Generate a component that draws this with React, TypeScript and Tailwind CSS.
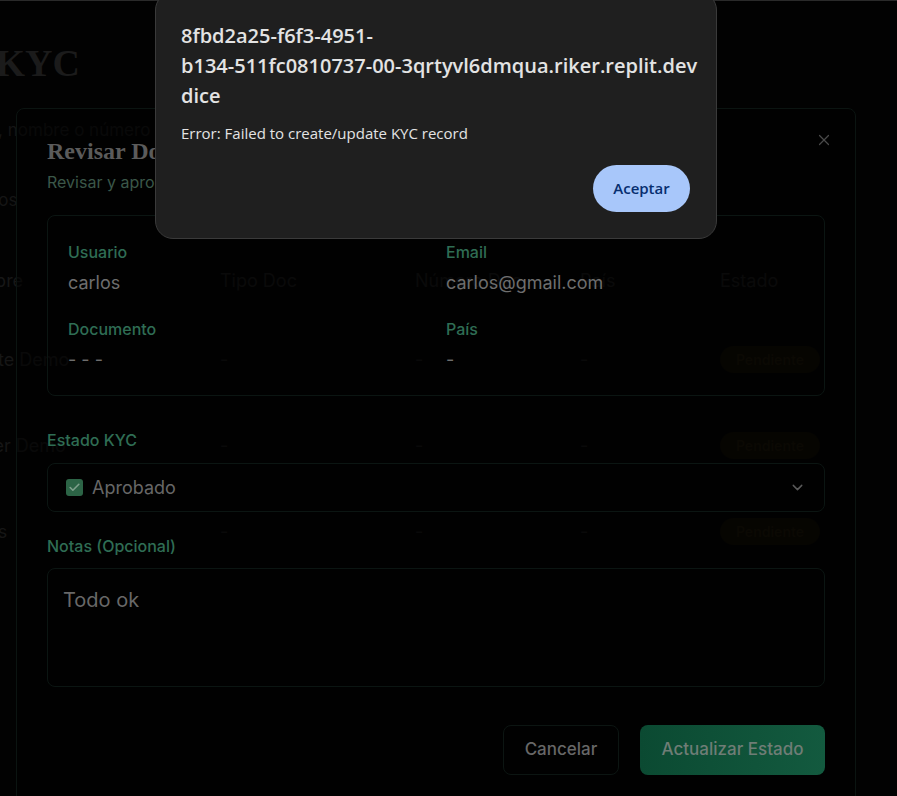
import { ChevronDown, X, Check } from "lucide-react";

const rows = ["Cliente Demo", "Trader Demo", "carlos"];

function Background() {
  return (
    <div className="relative min-h-[796px] w-[897px] overflow-hidden bg-[#020202] border-t border-[#2a2a2a] font-['Inter',sans-serif]">
      {/* page header */}
      <div className="ml-[-230px] mt-[40px] w-[310px] text-right font-['Liberation_Serif',serif] text-[38px] font-bold leading-[44px] text-[#1b1b1b]">
        Verificación KYC
      </div>
      <div className="ml-[-137px] mt-[33px] text-[17px] leading-6 text-[#151515]">
        Buscar por email, nombre o número de documento...
      </div>
      <div className="ml-[-32px] mt-[46px] text-[17px] leading-6 text-[#151515]">Todos</div>

      {/* table */}
      <div className="mt-[32px]">
        <div className="ml-[-45px] grid h-[72px] grid-cols-[265px_195px_165px_140px_1fr] items-center text-[18px] text-[#171717]">
          <span>Nombre</span>
          <span>Tipo Doc</span>
          <span>Número Doc</span>
          <span>País</span>
          <span>Estado</span>
        </div>
        {rows.map((name) => (
          <div key={name} className="ml-[-45px] grid h-[86px] grid-cols-[265px_195px_165px_140px_1fr] items-center text-[18px] text-[#161616]">
            <span>{name}</span>
            <span>-</span>
            <span>-</span>
            <span>-</span>
            <span>
              <span className="inline-flex h-[27px] w-[100px] items-center justify-center rounded-full bg-[#0d0a02] text-[14px] font-semibold text-[#1a1406]">
                Pendiente
              </span>
            </span>
          </div>
        ))}
      </div>
    </div>
  );
}

function Modal() {
  return (
    <div className="absolute left-[16px] top-[108px] h-[720px] w-[840px] rounded-lg border border-[#0b1411] bg-[#020202]/60 px-[30px] pt-[26px] font-['Inter',sans-serif]">
      <button className="absolute right-[22px] top-[22px] text-[#4a4a4a]">
        <X className="h-[18px] w-[18px]" strokeWidth={1.6} />
      </button>
      <h2 className="font-['Liberation_Serif',serif] text-[24px] font-bold leading-8 text-[#5b5b5b]">
        Revisar Documentos KYC
      </h2>
      <p className="mt-[3px] text-[16px] leading-6 text-[#3b5749]">
        Revisar y aprobar la verificación de identidad del usuario
      </p>

      <div className="mt-[21px] h-[181px] rounded-lg border border-[#0b1512] px-5 pt-[24px]">
        <div className="grid grid-cols-2 gap-x-[20px] gap-y-[20px]">
          <div>
            <div className="text-[16px] font-medium leading-6 text-[#2f6d54]">Usuario</div>
            <div className="mt-[5px] text-[18px] leading-7 text-[#6e6e6e]">carlos</div>
          </div>
          <div>
            <div className="text-[16px] font-medium leading-6 text-[#2f6d54]">Email</div>
            <div className="mt-[5px] text-[18px] leading-7 text-[#6e6e6e]">carlos@gmail.com</div>
          </div>
          <div>
            <div className="text-[16px] font-medium leading-6 text-[#2f6d54]">Documento</div>
            <div className="mt-[5px] text-[18px] leading-7 text-[#6e6e6e]">- - -</div>
          </div>
          <div>
            <div className="text-[16px] font-medium leading-6 text-[#2f6d54]">País</div>
            <div className="mt-[5px] text-[18px] leading-7 text-[#6e6e6e]">-</div>
          </div>
        </div>
      </div>

      <div className="mt-[32px] text-[16px] font-medium leading-6 text-[#2f6d54]">Estado KYC</div>
      <div className="mt-[11px] flex h-[49px] items-center rounded-lg border border-[#0b1512] pl-[18px] pr-[18px]">
        <span className="flex h-[17px] w-[17px] items-center justify-center rounded-[3px] bg-[#2c6446]">
          <Check className="h-[13px] w-[13px] text-[#7fa08c]" strokeWidth={3} />
        </span>
        <span className="ml-[9px] text-[18px] text-[#676767]">Aprobado</span>
        <ChevronDown className="ml-auto h-[17px] w-[17px] text-[#5a5a5a]" strokeWidth={2} />
      </div>

      <div className="mt-[22px] text-[16px] font-medium leading-6 text-[#2f6d54]">Notas (Opcional)</div>
      <div className="mt-[10px] h-[119px] rounded-lg border border-[#0b1512] px-[15px] pt-[17px] text-[20px] leading-7 text-[#686868]">
        Todo ok
      </div>

      <div className="mt-[38px] flex justify-end gap-[21px]">
        <button className="h-[50px] w-[116px] rounded-lg border border-[#0c1512] text-[17px] font-medium text-[#676767]">
          Cancelar
        </button>
        <button className="h-[50px] w-[185px] rounded-lg bg-gradient-to-r from-[#0b4a32] to-[#135a3f] text-[17px] font-medium text-[#6f7d76]">
          Actualizar Estado
        </button>
      </div>
    </div>
  );
}

function Alert() {
  return (
    <div className="absolute left-[155px] top-[-8px] w-[562px] rounded-[18px] border border-[#3a3a3a] bg-[#1f1f1f] pl-[25px] pr-[20px] pb-[26px] pt-[28px] font-['Open_Sans',sans-serif] text-[#e3e3e3]">
      <div className="whitespace-nowrap text-[20px] font-semibold leading-[30px]">
        <div>8fbd2a25-f6f3-4951-</div>
        <div>b134-511fc0810737-00-3qrtyvl6dmqua.riker.replit.dev</div>
        <div>dice</div>
      </div>
      <p className="mt-[12px] text-[15px] leading-5">Error: Failed to create/update KYC record</p>
      <div className="mt-[22px] flex justify-end pr-[6px]">
        <button className="h-[47px] w-[97px] rounded-full bg-[#a8c7fa] text-[15px] font-semibold text-[#062e6f]">
          Aceptar
        </button>
      </div>
    </div>
  );
}

export default function App() {
  return (
    <div className="relative h-[796px] w-[897px] overflow-hidden bg-[#020202]">
      <Background />
      <Modal />
      <Alert />
    </div>
  );
}
